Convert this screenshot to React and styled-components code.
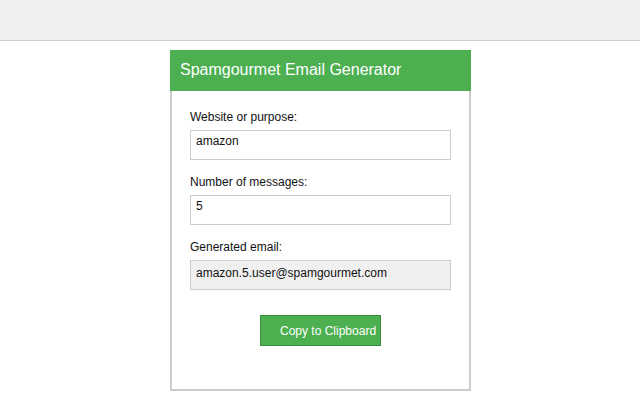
import styled, { createGlobalStyle } from "styled-components";

const GlobalStyle = createGlobalStyle`
  html, body {
    margin: 0;
    padding: 0;
    background: #fff;
  }
  body {
    font-family: "Liberation Sans", Arial, sans-serif;
    color: #222;
  }
`;

const TopBar = styled.div`
  height: 40px;
  background-color: #f0f0f0;
  border-bottom: 1px solid #cfcfcf;
`;

const Panel = styled.div`
  width: 301px;
  margin: 9px 0 0 170px;
`;

const Header = styled.div`
  height: 41px;
  background-color: #4caf50;
  color: #fff;
  font-size: 16px;
  line-height: 40px;
  padding-left: 10px;
  box-sizing: border-box;
`;

const Body = styled.div`
  border: 2px solid #cccccc;
  border-top: none;
  padding: 19px 18px 43px;
  display: flex;
  flex-direction: column;
`;

const Field = styled.div`
  display: flex;
  flex-direction: column;
  gap: 6px;
  margin-bottom: 15px;
`;

const Label = styled.label`
  font-size: 12px;
  line-height: 14px;
  color: #111;
`;

const TextInput = styled.input`
  width: 261px;
  height: 30px;
  box-sizing: border-box;
  border: 1px solid #cccccc;
  padding: 3px 5px 11px;
  font-family: inherit;
  font-size: 12px;
  color: #111;
  background: #fff;
  outline: none;
`;

const Output = styled.div`
  width: 261px;
  height: 30px;
  box-sizing: border-box;
  border: 1px solid #cccccc;
  padding: 5px 5px;
  font-size: 12px;
  line-height: 14px;
  color: #111;
  background: #f0f0f0;
`;

const ButtonRow = styled.div`
  display: flex;
  justify-content: center;
  margin-top: 10px;
`;

const CopyButton = styled.button`
  width: 121px;
  height: 31px;
  box-sizing: border-box;
  background-color: #4caf50;
  border: 1px solid #3c8f40;
  color: #fff;
  font-family: inherit;
  font-size: 12px;
  padding: 1px 0 0 19px;
  text-align: left;
  white-space: nowrap;
  overflow: visible;
  cursor: pointer;
`;

const App = () => {
  return (
    <>
      <GlobalStyle />
      <TopBar />
      <Panel>
        <Header>Spamgourmet Email Generator</Header>
        <Body>
          <Field>
            <Label>Website or purpose:</Label>
            <TextInput defaultValue="amazon" />
          </Field>
          <Field>
            <Label>Number of messages:</Label>
            <TextInput defaultValue="5" />
          </Field>
          <Field>
            <Label>Generated email:</Label>
            <Output>amazon.5.user@spamgourmet.com</Output>
          </Field>
          <ButtonRow>
            <CopyButton>Copy to Clipboard</CopyButton>
          </ButtonRow>
        </Body>
      </Panel>
    </>
  );
};

export default App;
